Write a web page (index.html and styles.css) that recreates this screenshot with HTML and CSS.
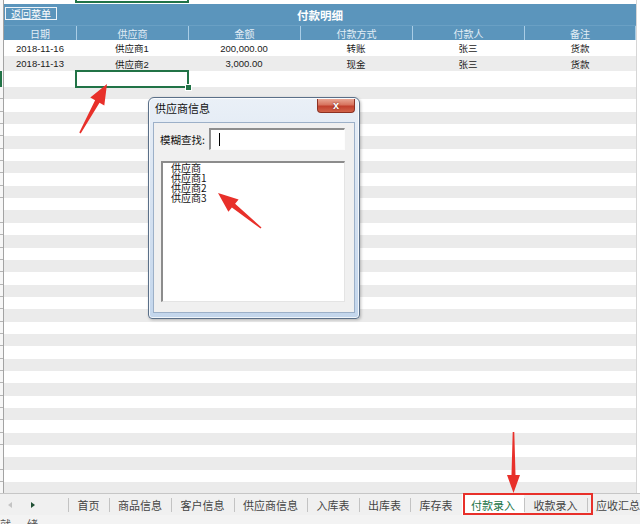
FILE: index.html
```html
<!DOCTYPE html>
<html lang="zh-CN">
<head>
<meta charset="utf-8">
<title>付款明细</title>
<link rel="stylesheet" href="styles.css">
</head>
<body>
<div class="app">
  <div class="sheet">
    <div class="rowhdr">
      <div class="rh-top"></div>
      <div class="rh-sel"></div>
      <div class="rh-rest"></div>
    </div>
    <div class="main">
      <div class="topstrip"><div class="prevsel"></div></div>
      <div class="titlebar">
        <button class="backbtn">返回菜单</button>
        <div class="title">付款明细</div>
      </div>
      <div class="row colhead">
        <div>日期</div><div>供应商</div><div>金额</div><div>付款方式</div><div>付款人</div><div>备注</div>
      </div>
      <div class="row data r1">
        <div>2018-11-16</div><div>供应商1</div><div>200,000.00</div><div>转账</div><div>张三</div><div>货款</div>
      </div>
      <div class="row data r2">
        <div>2018-11-13</div><div>供应商2</div><div>3,000.00</div><div>现金</div><div>张三</div><div>货款</div>
      </div>
      <div class="row data r3">
        <div></div><div class="selcell"></div>
      </div>
      <div class="blank"></div>
    </div>
    <div class="rightedge"></div>
  </div>

  <div class="tabbar">
    <div class="nav"><span class="tri-l"></span><span class="tri-r"></span></div>
    <div class="tab">首页</div>
    <div class="tab">商品信息</div>
    <div class="tab">客户信息</div>
    <div class="tab">供应商信息</div>
    <div class="tab">入库表</div>
    <div class="tab">出库表</div>
    <div class="tab">库存表</div>
    <div class="tab active">付款录入</div>
    <div class="tab">收款录入</div>
    <div class="tab">应收汇总</div>
  </div>
  <div class="status"><span>就</span><span>绪</span></div>

  <div class="dialog">
    <div class="dlg-title">
      <span class="dlg-text">供应商信息</span>
      <button class="dlg-close">x</button>
    </div>
    <div class="dlg-client">
      <div class="search">
        <label class="search-label">模糊查找:</label>
        <div class="input"><span class="caret"></span></div>
      </div>
      <ul class="listbox">
        <li>供应商</li>
        <li>供应商1</li>
        <li>供应商2</li>
        <li>供应商3</li>
      </ul>
    </div>
  </div>

  <svg class="overlay" width="640" height="524" viewBox="0 0 640 524">
    <polygon class="arrow" points="80.7,133.4 99.5,102.7 104.3,105.4 107,84 90.3,97.6 95.1,100.3 79.3,132.6"/>
    <polygon class="arrow" points="261.5,227.4 235.1,203.7 238.6,199.4 218,193 228.4,211.8 231.9,207.5 260.5,228.6"/>
    <polygon class="arrow" points="514.3,432 515.5,475 520,475 513.5,493 507,475 511.5,475 512.7,432"/>
    <rect class="redbox" x="464" y="494" width="128" height="20"/>
  </svg>
</div>
</body>
</html>
```
FILE: styles.css
```css
* { box-sizing: border-box; margin: 0; padding: 0; }
html, body { width: 640px; height: 524px; overflow: hidden; }
body {
  background: #fff;
  font-family: "Liberation Sans", "Noto Sans CJK SC", sans-serif;
  color: #222;
}
.app {
  position: relative;
  width: 640px;
  height: 524px;
  display: flex;
  flex-direction: column;
}

/* sheet */
.sheet { display: flex; height: 493px; }
.rowhdr {
  width: 4px;
  border-right: 1px solid #a3a3a3;
  background: #f7f7f7;
  display: flex;
  flex-direction: column;
}
.rh-top { height: 71px; }
.rh-sel { height: 16px; background: #217346; width: 2px; }
.rh-rest {
  flex: 1;
  background: repeating-linear-gradient(to bottom, transparent 0, transparent 11.35px, #b5b5b5 11.35px, #b5b5b5 12.35px);
}
.main { width: 632px; display: flex; flex-direction: column; }
.rightedge { flex: 1; border-left: 1px solid #d6d6d6; }

.topstrip {
  height: 4px;
  display: grid;
  grid-template-columns: 72px repeat(5, 112px);
}
.prevsel {
  grid-column: 2;
  height: 3px;
  margin: 0 -1px;
  border: 2px solid #217346;
  border-top: 0;
}

.titlebar {
  height: 21px;
  background: #5b95bc;
  display: grid;
  grid-template-columns: 1fr auto 1fr;
  align-items: center;
}
.backbtn {
  justify-self: start;
  align-self: start;
  margin: 3px 0 0 1px;
  width: 52px;
  height: 13px;
  border: 1px solid #eef4f9;
  background: transparent;
  color: #fff;
  font: 10px/11px "Noto Sans CJK SC", sans-serif;
}
.title {
  color: #fff;
  font: bold 11.5px/14px "Noto Sans CJK SC", sans-serif;
}

.row { display: grid; grid-template-columns: 72px repeat(5, 112px); }
.row > div { display: flex; align-items: center; justify-content: center; }
.colhead {
  height: 15px;
  background: #5b95bc;
  color: #e3eef6;
  font-size: 10px;
  border-top: 1px solid #6aa0c4;
}
.colhead > div + div { border-left: 1px solid #a9cde6; }
.colhead > div:last-child { border-right: 1px solid #a9cde6; }

.data { font-size: 9.5px; color: #1a1a1a; }
.r1 { height: 16px; background: #fff; }
.r2 { height: 15px; background: #ececec; }
.r3 { height: 16px; background: #fff; }
.selcell {
  grid-column: 2;
  position: relative;
  outline: 2px solid #217346;
  outline-offset: -1px;
}
.selcell::after {
  content: "";
  position: absolute;
  right: -4px;
  bottom: -4px;
  width: 5px;
  height: 5px;
  background: #217346;
  border: 1px solid #fff;
}
.blank {
  flex: 1;
  background: repeating-linear-gradient(to bottom, #ebebeb 0, #ebebeb 12.35px, #fff 12.35px, #fff 24.7px);
}

/* sheet tabs */
.tabbar {
  height: 22px;
  border-top: 1px solid #c6c6c6;
  background: #f0f0f0;
  display: flex;
  align-items: stretch;
  font: 11px "Noto Sans CJK SC", sans-serif;
  color: #444;
  white-space: nowrap;
  overflow: hidden;
}
.nav {
  width: 68px;
  flex: none;
  display: flex;
  align-items: center;
  gap: 19px;
  padding-left: 8px;
}
.tri-l {
  width: 0; height: 0;
  border-style: solid;
  border-color: transparent;
  border-width: 3px 4px 3px 0;
  border-right-color: #c4c4c4;
}
.tri-r {
  width: 0; height: 0;
  border-style: solid;
  border-color: transparent;
  border-width: 3px 0 3px 4px;
  border-left-color: #1f4f33;
}
.tab {
  flex: none;
  display: flex;
  align-items: center;
  padding: 0 9px 0 9.5px;
  background: linear-gradient(#c3c3c3, #c3c3c3) left center / 1px 14px no-repeat;
}
.tab.active { background: #fff; color: #217346; }

.status {
  flex: 1;
  background: #f3f3f3;
  display: flex;
  gap: 16px;
  font: 11px/11px "Noto Sans CJK SC", sans-serif;
  color: #555;
  padding-top: 4px;
  overflow: hidden;
}

/* dialog */
.dialog {
  position: absolute;
  left: 148px;
  top: 97px;
  width: 212px;
  height: 222px;
  border: 1px solid #5a6f88;
  border-radius: 6px 6px 4px 4px;
  background: linear-gradient(#eaf0f7, #d3e0f0 55%, #c3d6ec);
  box-shadow: inset 0 0 0 1px rgba(255, 255, 255, 0.75), 1px 1px 3px rgba(0, 0, 0, 0.25);
  padding: 0 4px 5px;
  display: flex;
  flex-direction: column;
  font-family: "Noto Sans CJK SC", sans-serif;
  color: #111;
}
.dlg-title {
  height: 24px;
  flex: none;
  display: flex;
  justify-content: space-between;
  align-items: flex-start;
}
.dlg-text { font-size: 11px; line-height: 11px; margin: 5px 0 0 2px; }
.dlg-close {
  margin-top: 1px;
  width: 38px;
  height: 14px;
  border: 1px solid #8c3123;
  border-top: 0;
  border-radius: 0 0 4px 4px;
  background: linear-gradient(#e9a693 0%, #d7735e 45%, #c2402d 55%, #d0634a 100%);
  color: #fff;
  font: bold 11px/11px "Liberation Sans", sans-serif;
  text-shadow: 0 0 2px #6b1d12;
}
.dlg-client {
  flex: 1;
  background: #f0f0f0;
  border: 1px solid #9cb0c8;
  padding: 5px 9px 0 6px;
}
.search { display: flex; align-items: center; height: 22px; }
.search-label { width: 49px; flex: none; font-size: 10.5px; }
.input {
  flex: 1;
  height: 22px;
  background: #fff;
  border-top: 2px solid #8e8e8e;
  border-left: 2px solid #8e8e8e;
  border-right: 1px solid #fdfdfd;
  border-bottom: 1px solid #fdfdfd;
  padding: 3px 0 0 8px;
}
.caret { display: block; width: 1px; height: 13px; background: #000; }
.listbox {
  list-style: none;
  margin: 11px 0 0 1px;
  height: 141px;
  background: #fff;
  border-top: 2px solid #8c8c8c;
  border-left: 2px solid #8c8c8c;
  border-right: 1px solid #e4e4e4;
  border-bottom: 1px solid #e4e4e4;
  padding-left: 8px;
  font-size: 10px;
  line-height: 10px;
}

/* annotation overlay */
.overlay { position: absolute; left: 0; top: 0; pointer-events: none; }
.arrow { fill: #e8302a; }
.redbox { fill: none; stroke: #e8302a; stroke-width: 2; }
```
